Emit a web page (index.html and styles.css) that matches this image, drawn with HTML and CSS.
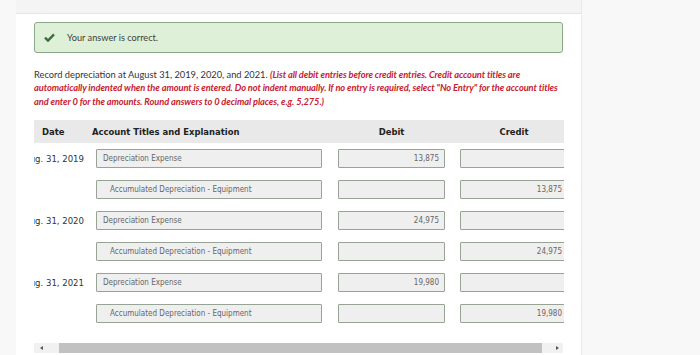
FILE: index.html
```html
<!DOCTYPE html>
<html>
<head>
<meta charset="utf-8">
<link rel="stylesheet" href="styles.css">
</head>
<body>
<div class="page">
  <div class="panel">
    <div class="panel-top"></div>
    <div class="panel-body">
      <div class="alert">
        <svg class="check" width="11" height="9" viewBox="0 0 11 9"><path d="M1 4.6 L4 7.6 L10 1.4" fill="none" stroke="#3f6b3e" stroke-width="2.4"/></svg>
        <span>Your answer is correct.</span>
      </div>
      <p class="prompt">Record depreciation at August 31, 2019, 2020, and 2021. <em class="note">(List all debit entries before credit entries. Credit account titles are automatically indented when the amount is entered. Do not indent manually. If no entry is required, select "No Entry" for the account titles and enter 0 for the amounts. Round answers to 0 decimal places, e.g. 5,275.)</em></p>

      <div class="table-wrap">
        <div class="thead">
          <div class="c-date h-date">Date</div>
          <div class="c-acct h-acct">Account Titles and Explanation</div>
          <div class="c-debit h-num">Debit</div>
          <div class="c-credit h-num">Credit</div>
        </div>

        <div class="row">
          <div class="c-date date"><span>Aug. 31, 2019</span></div>
          <div class="c-acct"><div class="field">Depreciation Expense</div></div>
          <div class="c-debit"><div class="field num">13,875</div></div>
          <div class="c-credit"><div class="field num"></div></div>
        </div>
        <div class="row">
          <div class="c-date date"></div>
          <div class="c-acct"><div class="field indent">Accumulated Depreciation - Equipment</div></div>
          <div class="c-debit"><div class="field num"></div></div>
          <div class="c-credit"><div class="field num">13,875</div></div>
        </div>
        <div class="row">
          <div class="c-date date"><span>Aug. 31, 2020</span></div>
          <div class="c-acct"><div class="field">Depreciation Expense</div></div>
          <div class="c-debit"><div class="field num">24,975</div></div>
          <div class="c-credit"><div class="field num"></div></div>
        </div>
        <div class="row">
          <div class="c-date date"></div>
          <div class="c-acct"><div class="field indent">Accumulated Depreciation - Equipment</div></div>
          <div class="c-debit"><div class="field num"></div></div>
          <div class="c-credit"><div class="field num">24,975</div></div>
        </div>
        <div class="row">
          <div class="c-date date"><span>Aug. 31, 2021</span></div>
          <div class="c-acct"><div class="field">Depreciation Expense</div></div>
          <div class="c-debit"><div class="field num">19,980</div></div>
          <div class="c-credit"><div class="field num"></div></div>
        </div>
        <div class="row">
          <div class="c-date date"></div>
          <div class="c-acct"><div class="field indent">Accumulated Depreciation - Equipment</div></div>
          <div class="c-debit"><div class="field num"></div></div>
          <div class="c-credit"><div class="field num">19,980</div></div>
        </div>
      </div>

      <div class="hscroll">
        <div class="arrow left"></div>
        <div class="track"><div class="thumb"></div></div>
        <div class="arrow right"></div>
      </div>
    </div>
  </div>
</div>
</body>
</html>
```

FILE: styles.css
```css
html, body {
  margin: 0;
  padding: 0;
  background: #f8f8f8;
  height: 355px;
  overflow: hidden;
}
.page {
  padding-left: 16px;
  height: 355px;
}
.panel {
  width: 565px;
  height: 355px;
  background: #fff;
  border-right: 1px solid #e9e9e9;
  display: flex;
  flex-direction: column;
}
.panel-top {
  height: 13px;
  background: #f4f4f4;
  border-bottom: 1px solid #e6e6e6;
}
.panel-body {
  padding: 8px 18px 0 18px;
}
.alert {
  height: 29px;
  border: 1px solid #8aa887;
  border-radius: 3px;
  background: #dff0d8;
  display: flex;
  align-items: center;
  padding-left: 8px;
  font-family: Lato, sans-serif;
  font-size: 9.2px;
  color: #3a3f3a;
}
.check {
  margin-left: 1px;
  margin-right: 12px;
}
.prompt {
  margin: 15px -4px 0 0;
  font-family: Lato, sans-serif;
  font-size: 9.3px;
  line-height: 13.3px;
  color: #333;
}
.note {
  color: #c8202f;
  font-weight: bold;
  letter-spacing: -0.1px;
}
.table-wrap {
  margin-top: 12px;
  width: 530px;
  overflow: hidden;
}
.thead {
  height: 23px;
  background: #e9e9e9;
  display: flex;
  align-items: center;
  font-family: "DejaVu Sans Condensed", "DejaVu Sans", sans-serif;
  font-weight: bold;
  font-size: 9.4px;
  color: #222;
}
.c-date { width: 58px; flex: none; }
.c-acct { width: 226px; flex: none; margin-left: 4px; }
.c-debit { width: 107px; flex: none; margin-left: 16px; }
.c-credit { width: 108px; flex: none; margin-left: 15px; }
.h-date { padding-left: 8px; box-sizing: border-box; }
.h-num { text-align: center; }
.thead .c-acct { margin-left: 0; }
.thead .c-debit { margin-left: 20px; }
.row {
  display: flex;
  align-items: center;
  margin-top: 12px;
  height: 19px;
}
.thead + .row { margin-top: 6px; }
.date {
  display: flex;
  justify-content: flex-end;
  overflow: hidden;
  white-space: nowrap;
  padding-right: 8px;
  box-sizing: border-box;
  font-family: "DejaVu Sans Condensed", "DejaVu Sans", sans-serif;
  font-size: 9.5px;
  color: #333;
}
.field {
  height: 19px;
  box-sizing: border-box;
  border: 1px solid #97a394;
  border-radius: 1px;
  background: #efefef;
  font-family: "DejaVu Sans Condensed", "DejaVu Sans", sans-serif;
  font-size: 8px;
  color: #666;
  display: flex;
  align-items: center;
  padding: 0 6px;
  white-space: nowrap;
}
.field.indent { padding-left: 13px; }
.field.num { justify-content: flex-end; padding-right: 5px; }
.hscroll {
  margin-top: 20px;
  height: 10px;
  display: flex;
  background: #f1f1f1;
}
.arrow {
  width: 25px;
  flex: none;
  position: relative;
}
.arrow::after {
  content: "";
  position: absolute;
  top: 3px;
  border-top: 2px solid transparent;
  border-bottom: 2px solid transparent;
}
.arrow.left::after { left: 6px; border-right: 3px solid #555; }
.arrow.right::after { right: 5px; border-left: 3px solid #555; }
.track { flex: 1; display: flex; }
.thumb {
  width: 483px;
  background: #c1c1c1;
}
.arrow.right { width: 22px; }
```
